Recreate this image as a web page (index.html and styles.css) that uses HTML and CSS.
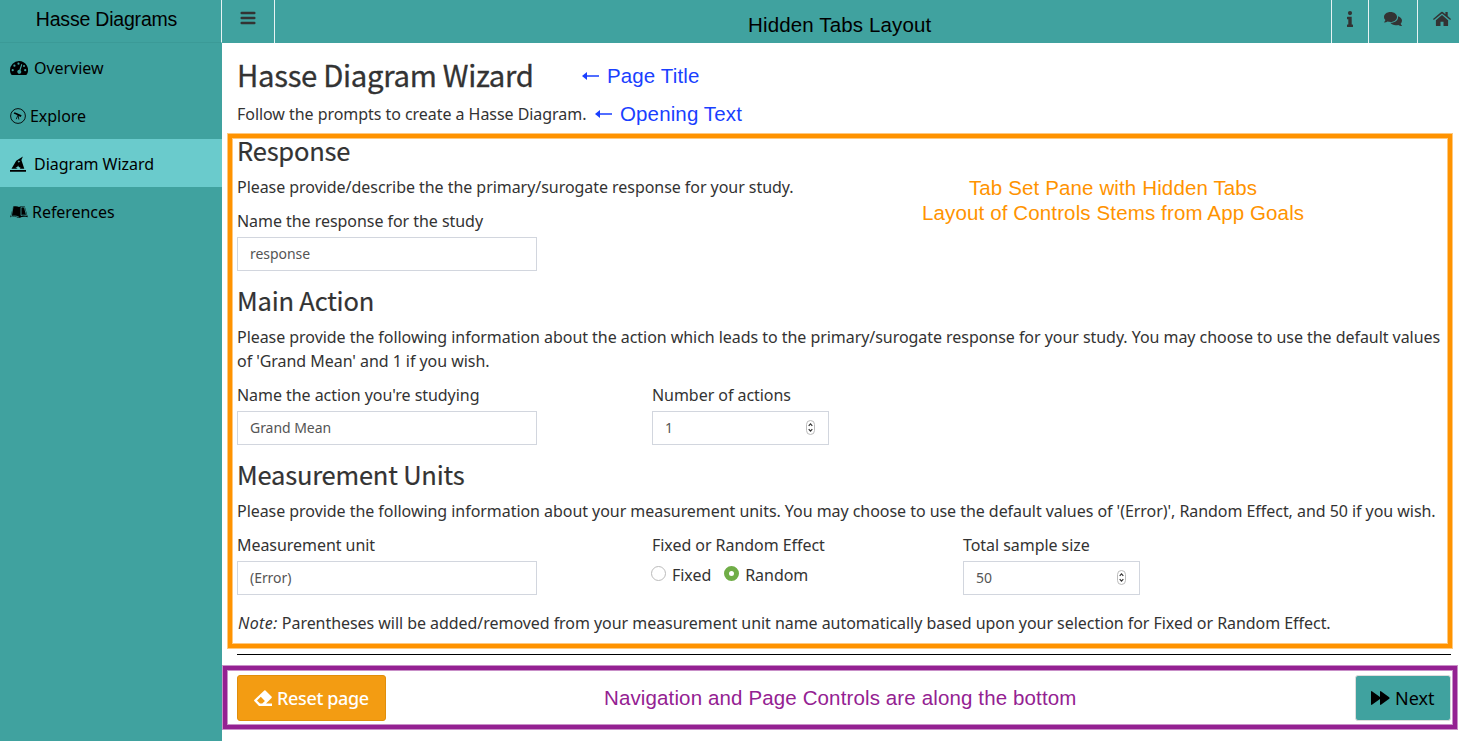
FILE: index.html
```
<!DOCTYPE html>
<html lang="en">
<head>
<meta charset="utf-8">
<title>Hasse Diagrams</title>
<link rel="stylesheet" href="styles.css">
</head>
<body>
<div class="app">
  <aside class="sidebar">
    <div class="logo"><span>Hasse Diagrams</span></div>
    <nav class="menu">
      <a class="item"><svg class="icon" width="18" height="14" viewBox="0 0 18 14"><path d="M9 0A9 9 0 0 0 0 9c0 1.800.5 3.300 1.200 4.500.2.300.5.500.9.500h13.800c.4 0 .7-.2.900-.5A9 9 0 0 0 9 0z"/><g fill="#40a29f"><circle cx="2.700" cy="9.200" r="1.100"/><circle cx="4.400" cy="4.700" r="1.100"/><circle cx="8.500" cy="2.700" r="1.100"/><circle cx="15.200" cy="9.200" r="1.100"/><circle cx="14" cy="5" r="1"/><path d="M11.300 3.100l1 .4-1.800 5.700a2 2 0 1 1-1.100-.4z"/></g></svg><span class="gap-wide">Overview</span></a>
      <a class="item"><svg class="icon" width="16" height="16" viewBox="0 0 16 16"><circle cx="8" cy="8" r="7.400" fill="none" stroke="#000" stroke-width=".9"/><path d="M3.600 5.600l.9-1.400 2.700 1.100-.6 1.500zM7.200 5.200l4.400 2.100-.8 1.800-4.300-2.200z"/><path d="M7.800 7.500l-1.600 3.700M8.200 7.500l.6 4" stroke="#000" stroke-width=".8"/></svg><span class="gap-small">Explore</span></a>
      <a class="item active"><svg class="icon" width="16" height="16" viewBox="0 0 16 16"><path d="M0 14h16v1.700H0zM1.500 12.800L6.200 4.800 12.900.600 11.400 4l2.900 8.800H9.800l.8-1-1.800-.7-.7-1.700-.8 1.700-1.800.7 1.800.8.300.2z"/><path d="M8.900 4.200l.4 1 1 .4-1 .4-.4 1-.4-1-1-.4 1-.4z" fill="#6acbcc"/></svg><span class="gap-mid">Diagram Wizard</span></a>
      <a class="item"><svg class="icon" width="18" height="12" viewBox="0 0 18 12"><path d="M3.200.5C5.400 0 7.700 0 9 1c1.300-1 3.600-1 5.800-.5L17.800 11.300c-3-.7-6-.7-7.800.4H8c-1.800-1.100-4.800-1.100-7.800-.4z"/><path d="M3 1.200L1.300 10.400c2.800-.6 5.500-.4 7.500.6M11 1.300v8.200c1.500-.5 3.500-.5 5.500 0L14.400 1.200C13.300.9 12 1 11 1.300z" stroke="#40a29f" stroke-width=".8" fill="none"/></svg><span class="gap-small">References</span></a>
    </nav>
  </aside>
  <div class="page">
    <header class="topbar">
      <a class="toggle"><svg width="16" height="14" viewBox="0 0 16 14" fill="none" stroke="#333" stroke-width="2.500" stroke-linecap="round"><path d="M1.700 2h12.600M1.700 7h12.600M1.700 12h12.600"/></svg></a>
      <div class="bar-title"><span>Hidden Tabs Layout</span></div>
      <a class="tool info"><svg width="6" height="16" viewBox="0 0 6 16" fill="#333"><circle cx="3" cy="2.100" r="2.100"/><path d="M.5 5.700h4.200v7.800h.8q.5 0 .5.500V15.500q0 .5-.5.500H.5q-.5 0-.5-.5V14q0-.5.5-.5h.8V8.200H.5Q0 8.200 0 7.700V6.200q0-.5.5-.5z"/></svg></a>
      <a class="tool chat"><svg width="18" height="14" viewBox="0 0 18 14" fill="#333"><path d="M6.500 0C10.200 0 13 2.200 13 5s-2.800 5-6.500 5c-1.100 0-2-.2-2.900-.5C2.700 10.100 1.500 10.500.1 10.500c-.2-.2 1-1.300 1.300-2.500C.5 7.200 0 6.200 0 5c0-2.800 2.800-5 6.500-5z"/><path d="M14 4.200c2.300.7 4 2.500 4 4.600 0 1.100-.5 2.100-1.300 3 .3 1 1.300 1.900 1.300 2.100-1.400 0-2.700-.4-3.600-1-3.200 1-6.700 0-8.100-2.100 4.800.1 8.300-2.600 7.700-6.600z"/></svg></a>
      <a class="tool home"><svg width="18" height="15" viewBox="0 0 18 15" fill="#333"><path d="M9 4.100l6.100 5.100v5.200q0 .6-.6.600h-4v-4.200H7.500V15h-4q-.6 0-.6-.6V9.200z"/><path d="M0 8L8.200 1q.8-.7 1.600 0l2.600 2.200V1h2.300v4.100L18 8l-.8 1L9 2.500.8 9z"/></svg></a>
    </header>
    <main class="content">
      <h1><span>Hasse Diagram Wizard</span></h1>
      <p class="opening">Follow the prompts to create a Hasse Diagram.</p>
      <section>
        <h2>Response</h2>
        <p>Please provide/describe the the primary/surogate response for your study.</p>
        <div class="fields"><div class="field"><label>Name the response for the study</label><div class="input">response</div></div></div>
      </section>
      <section>
        <h2>Main Action</h2>
        <p>Please provide the following information about the action which leads to the primary/surogate response for your study. You may choose to use the default values<br>of 'Grand Mean' and 1 if you wish.</p>
        <div class="fields">
          <div class="field"><label>Name the action you're studying</label><div class="input">Grand Mean</div></div>
          <div class="field"><label>Number of actions</label><div class="input number">1<svg class="spin" width="9" height="15" viewBox="0 0 9 15" fill="none"><rect x=".5" y=".5" width="8" height="14" rx="4" stroke="#bbb"/><path d="M2.700 5.800l1.800-2 1.800 2M2.700 9.200l1.800 2 1.800-2" stroke="#333" stroke-width="1.200"/></svg></div></div>
        </div>
      </section>
      <section>
        <h2>Measurement Units</h2>
        <p>Please provide the following information about your measurement units. You may choose to use the default values of '(Error)', Random Effect, and 50 if you wish.</p>
        <div class="fields">
          <div class="field"><label>Measurement unit</label><div class="input">(Error)</div></div>
          <div class="field"><label>Fixed or Random Effect</label><div class="radios"><i class="radio"></i><span>Fixed</span><i class="radio checked"></i><span>Random</span></div></div>
          <div class="field"><label>Total sample size</label><div class="input number">50<svg class="spin" width="9" height="15" viewBox="0 0 9 15" fill="none"><rect x=".5" y=".5" width="8" height="14" rx="4" stroke="#bbb"/><path d="M2.700 5.800l1.800-2 1.800 2M2.700 9.200l1.800 2 1.800-2" stroke="#333" stroke-width="1.200"/></svg></div></div>
        </div>
      </section>
      <p class="note"><em>Note:</em> Parentheses will be added/removed from your measurement unit name automatically based upon your selection for Fixed or Random Effect.</p>
      <hr>
      <footer class="controls">
        <button class="btn reset"><svg width="18" height="16" viewBox="0 0 18 16"><path fill="#fff" fill-rule="evenodd" d="M10.300.5q.6-.6 1.200 0l6 6q.7.700 0 1.400L12 13.600h6V16H5L.5 11.300q-.8-.8 0-1.500zM6.800 6.800L3 10.600l3 3h2.300l2.600-2.700z"/></svg><span>Reset page</span></button>
        <button class="btn next"><svg width="19" height="14" viewBox="0 0 19 14"><path d="M0 1Q0-.5 1.300.4L9 6V1Q9-.5 10.300.4L18.200 6.200q.8.800 0 1.600L10.300 13.600Q9 14.500 9 13V8L1.300 13.600Q0 14.500 0 13z"/></svg><span>Next</span></button>
      </footer>
    </main>
  </div>
  <div class="frame frame-tabs"></div>
  <div class="frame frame-nav"></div>
  <div class="callout title-note"><svg width="17" height="10" viewBox="0 0 17 10"><path d="M0 5l5-4v3.300h12v1.400H5V9z"/></svg><span>Page Title</span></div>
  <div class="callout opening-note"><svg width="17" height="10" viewBox="0 0 17 10"><path d="M0 5l5-4v3.300h12v1.400H5V9z"/></svg><span>Opening Text</span></div>
  <div class="callout tabs-note">Tab Set Pane with Hidden Tabs<br>Layout of Controls Stems from App Goals</div>
  <div class="callout nav-note">Navigation and Page Controls are along the bottom</div>
</div>
</body>
</html>
```
FILE: styles.css
```
* { box-sizing: border-box; }
body { margin: 0; background: #fff; color: #333; font: 16px/24px "Noto Sans", sans-serif; letter-spacing: -.048px; overflow: hidden; }
.app { position: relative; display: flex; width: 1459px; height: 741px; }
svg { display: block; flex: none; }
h1, h2, p { margin: 0; }

.sidebar { width: 222px; flex: none; background: #40a29f; color: #000; }
.logo { height: 43px; padding: 7px 8px 0 0; border-right: 1px solid #e8f3f3; border-bottom: 1px solid #3b9a97; text-align: center; font: 300 19.5px/25px "Liberation Sans", sans-serif; letter-spacing: -.2px; }
.item { display: flex; align-items: center; height: 48px; padding: 2px 0 0 10px; }
.item.active { background: #6acbcc; }
.gap-wide { margin-left: 6px; }
.gap-small { margin-left: 4px; }
.gap-mid { margin-left: 8px; }

.page { flex: 1; min-width: 0; }
.topbar { display: flex; height: 43px; background: #40a29f; }
.toggle { width: 53px; padding: 11px 0 0 18px; border-right: 1px solid #e8f3f3; }
.bar-title { flex: 1; padding: 12px 0 0 473px; color: #000; font: 20.5px/25px "Liberation Sans", sans-serif; letter-spacing: .14px; white-space: nowrap; }
.tool { padding-top: 11px; border-left: 1px solid #e8f3f3; }
.info { width: 37px; padding-left: 15px; }
.chat { width: 49px; padding: 12px 0 0 15px; }
.home { width: 42px; padding-left: 15px; }

.content { padding: 13px 8px 0 15px; }
h1 { height: 46px; font: 400 29.3px/36px "Noto Sans CJK SC", sans-serif; letter-spacing: -.3px; -webkit-text-stroke: .3px #333; }
h2 { height: 34px; margin: -2px 0 7px; font: 400 25.5px/32px "Noto Sans CJK SC", sans-serif; letter-spacing: -.2px; -webkit-text-stroke: .2px #333; }
.opening { margin-bottom: 10px; }
section { margin-bottom: 15px; }
section p { margin-bottom: 10px; white-space: nowrap; }
.fields { display: grid; grid-template-columns: 415px 311px 177px; }
.field { height: 62px; }
.field label { display: block; margin-bottom: 4px; }
.input { display: flex; align-items: center; width: 300px; height: 34px; padding: 0 12px; border: 1px solid #d2d6de; color: #555; font-size: 14px; }
.number { width: 177px; padding-right: 13px; justify-content: space-between; }
.spin { margin-top: -1px; }
.radios { display: flex; height: 24px; margin-top: 6px; align-items: center; }
.radio { width: 15px; height: 15px; margin: -3px 6px 0 -1px; border: 1px solid #bbb; border-radius: 50%; background: #fff; }
.radios span + .radio { margin-left: 13px; }
.radio.checked { border: 5px solid #70ad47; }
.note { margin-top: 16px; padding-left: 1px; white-space: nowrap; }
.note em { letter-spacing: .4px; }
hr { height: 1px; margin: 19px 0 20px; border: 0; background: #000; }
.controls { display: flex; justify-content: space-between; }
.btn { display: flex; align-items: center; height: 46px; padding: 0 15px; border: 1px solid #e08e0b; border-radius: 3px; font: 18px/24px "Noto Sans", sans-serif; white-space: nowrap; }
.btn span { margin-left: 5px; }
.reset { width: 149px; padding-left: 16px; background: #f39c12; color: #fff; font-weight: 500; letter-spacing: -.35px; }
.next { width: 96px; background: #40a29f; color: #000; border-color: #ddd; }

/* Annotations layered over the page */
.frame { position: absolute; }
.frame-tabs { left: 228px; top: 134px; width: 1224px; height: 514px; border: 4px solid #ff9300; box-shadow: 0 0 0 1px rgba(255,147,0,.5), inset 0 0 0 1px rgba(255,147,0,.5); }
.frame-nav { left: 223px; top: 666px; width: 1234px; height: 63px; border: 4px solid #942192; box-shadow: 0 0 0 1px rgba(148,33,146,.5), inset 0 0 0 1px rgba(148,33,146,.5); }
.callout { position: absolute; font: 20.5px/25px "Liberation Sans", sans-serif; letter-spacing: .13px; white-space: nowrap; }
.title-note, .opening-note { display: flex; align-items: center; gap: 8px; color: #1a3fff; fill: #1a3fff; }
.title-note { left: 582px; top: 63px; }
.opening-note { left: 595px; top: 101px; }
.tabs-note { left: 922px; top: 175px; color: #ff9300; text-align: center; }
.nav-note { left: 604px; top: 685px; color: #942192; }
```
